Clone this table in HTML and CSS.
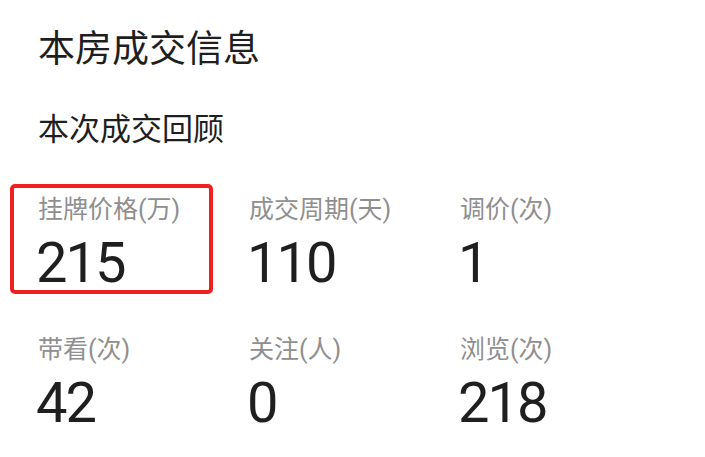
FILE: index.html
```html
<!DOCTYPE html>
<html lang="zh-CN">
<head>
<meta charset="utf-8">
<link rel="stylesheet" href="styles.css">
</head>
<body>
<div class="page">
  <h1 class="title">本房成交信息</h1>
  <h2 class="subtitle">本次成交回顾</h2>
  <div class="grid">
    <div class="cell highlight">
      <div class="label">挂牌价格(万)</div>
      <div class="value">215</div>
    </div>
    <div class="cell">
      <div class="label">成交周期(天)</div>
      <div class="value">110</div>
    </div>
    <div class="cell">
      <div class="label">调价(次)</div>
      <div class="value">1</div>
    </div>
    <div class="cell">
      <div class="label">带看(次)</div>
      <div class="value">42</div>
    </div>
    <div class="cell">
      <div class="label">关注(人)</div>
      <div class="value">0</div>
    </div>
    <div class="cell">
      <div class="label">浏览(次)</div>
      <div class="value">218</div>
    </div>
  </div>
</div>
</body>
</html>
```

FILE: styles.css
```css
html, body {
  margin: 0;
  padding: 0;
  background: #ffffff;
}
body {
  font-family: Roboto, "Noto Sans CJK SC", sans-serif;
  color: #1f1f1f;
}
.page {
  padding: 26px 0 0 10px;
}
.title {
  margin: 0 0 0 28px;
  font-size: 37px;
  font-weight: 400;
  line-height: 48px;
}
.subtitle {
  margin: 36px 0 0 28px;
  font-size: 31px;
  font-weight: 400;
  line-height: 40px;
}
.grid {
  margin-top: 34px;
  display: grid;
  grid-template-columns: repeat(3, 203px);
  column-gap: 8px;
  row-gap: 30px;
}
.cell {
  border: 4px solid transparent;
  border-radius: 5px;
  padding: 6px 0 0 24px;
}
.highlight {
  border-color: #f02020;
}
.label {
  font-size: 25px;
  line-height: 32px;
  color: #8f8f8f;
}
.value {
  margin: 10px 0 0 -2px;
  font-size: 56px;
  line-height: 54px;
  letter-spacing: -2px;
  color: #1f1f1f;
}
```
